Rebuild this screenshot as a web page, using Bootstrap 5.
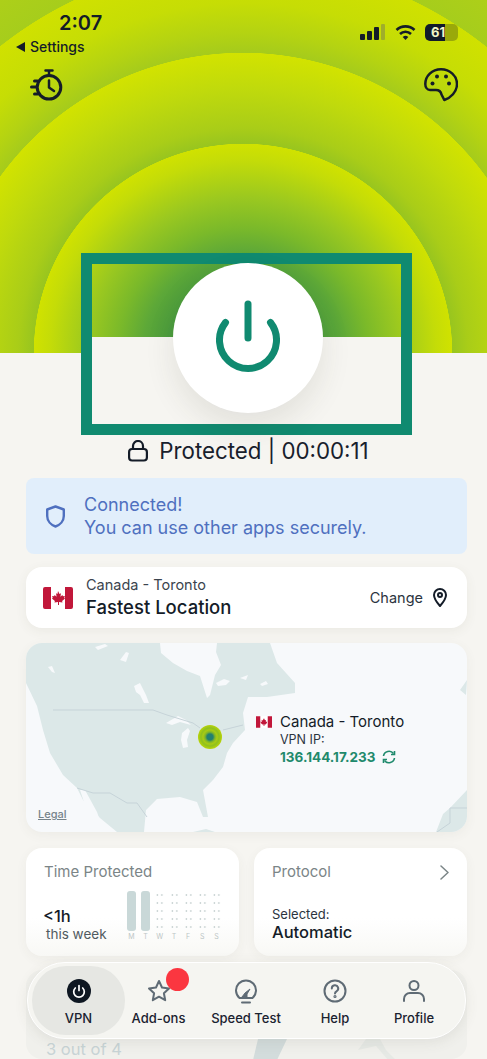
<!DOCTYPE html>
<html lang="en">
<head>
  <meta charset="UTF-8">
  <meta name="viewport" content="width=device-width, initial-scale=1.0">
  <title>VPN</title>
  <link href="https://cdn.jsdelivr.net/npm/bootstrap@5.3.0/dist/css/bootstrap.min.css" rel="stylesheet">
  <style>
    html, body { height: 1059px; overflow: hidden; }
    body { background: #f6f5f1; font-family: Inter, "Noto Sans", sans-serif; color: #141c28; position: relative; }
    .hero {
      height: 353px; position: relative;
      background: radial-gradient(circle at 243px 353px,
        #4a9b3d 0, #4a9b3d 75px, #5da838 100px, #7ab92a 125px, #9ac820 155px, #c4dc08 193px, #d0e200 209px,
        #98c51f 209.5px, #a9cd18 225px, #c0da0c 265px, #d2e300 300px,
        #a5cb1c 300.5px, #b4d312 320px, #c6dd05 350px, #d0e100 391px,
        #a6cd1c 391.5px, #afd018 440px);
    }
    .clock { font-size: 20px; font-weight: 600; line-height: 24px; padding: 11px 0 0 59px; }
    .back-link { font-size: 14px; font-weight: 500; line-height: 18px; padding: 3px 0 0 16px; gap: 5px; }
    .sys-icons { padding: 24px 29px 0 0; gap: 9px; }
    .batt { width: 33px; height: 17px; border-radius: 5px; background: linear-gradient(90deg, #111a2a 61%, #9aa90a 61%); color: #f2f5c8; font-size: 13px; font-weight: 700; line-height: 17px; padding-left: 6px; }
    .top-tools { padding: 12px 29px 0 30px; }
    .power-frame {
      position: absolute; left: 81px; top: 253px; width: 331px; height: 182px;
      border: 11px solid #108a70;
      background: linear-gradient(transparent 73px, #f6f5f1 73px);
    }
    .power-btn {
      position: absolute; left: 81px; top: -1px; width: 150px; height: 150px; border-radius: 50%;
      background: #fff; box-shadow: 0 14px 30px rgba(60,60,40,.1);
    }
    .power-btn svg { margin-bottom: 4px; }
    .status-line { margin-top: 83px; height: 30px; padding-left: 10px; font-size: 22.3px; line-height: 30px; gap: 11px; color: #18202c; }
    .page-wrap { padding: 0 20px 0 26px; }
    .notice { margin-top: 12px; height: 76px; border-radius: 8px; background: #e1eefb; color: #4f70bf; font-size: 18px; line-height: 23px; padding-left: 20px; gap: 19px; }
    .loc-card { margin-top: 13px; height: 61px; border-radius: 16px; padding: 0 20px 0 17px; box-shadow: 0 3px 12px rgba(80,80,60,.07); }
    .loc-city { font-size: 14.5px; line-height: 20px; color: #3b444e; padding-left: 1px; }
    .loc-name { font-size: 18.5px; font-weight: 500; line-height: 25px; padding-left: 1px; }
    .loc-change { font-size: 14.5px; color: #2b343e; gap: 10px; }
    .map-card { margin-top: 15px; height: 189px; border-radius: 16px; overflow: hidden; position: relative; background: #f7f9fb; box-shadow: 0 3px 12px rgba(80,80,60,.06); }
    .map-pin { position: absolute; left: 172px; top: 82px; width: 24px; height: 24px; border-radius: 50%; background: radial-gradient(circle, #23806f 0, #23806f 3px, #7fb52a 5px, #a9cb12 7px, #8fc01e 9px, #b9d40a 12px); }
    .map-label { position: absolute; left: 230px; top: 69px; }
    .map-city { font-size: 15px; line-height: 20px; }
    .map-ip-label { font-size: 12.5px; line-height: 15px; padding-left: 24px; color: #2b343e; }
    .map-ip { font-size: 13.5px; font-weight: 700; line-height: 18px; padding-left: 24px; margin-top: 1px; color: #1f8a6c; gap: 6px; }
    .map-legal { position: absolute; left: 12px; top: 163px; font-size: 11px; font-weight: 500; color: #76838a; text-decoration: underline; }
    .stat-row { margin-top: 16px; gap: 15px; }
    .stat-card { height: 108px; width: 213px; border-radius: 16px; background: linear-gradient(#fff 65%, #f8f8f5); box-shadow: 0 3px 12px rgba(80,80,60,.05); padding: 14px 18px 0; }
    .stat-title { font-size: 15px; line-height: 20px; color: #7b8587; }
    .stat-big { font-size: 16.5px; font-weight: 500; line-height: 22px; }
    .stat-hours { margin-top: 23px; margin-left: -1px; }
    .stat-small { font-size: 13.5px; line-height: 14px; color: #505a60; padding-left: 2px; }
    .stat-sel { font-size: 13px; line-height: 15px; margin-top: 25px; color: #2b343e; }
    .stat-value { line-height: 20px; }
    .week-chart { position: absolute; left: 101px; top: 43px; gap: 5.5px; }
    .day-col { width: 8.7px; }
    .day-bar { height: 40px; border-radius: 3px; background: #c9d8d8; }
    .day-dots { height: 40px; background: radial-gradient(circle, #c2cdcd 0.7px, transparent 1.1px) 0 0 / 4.6px 8px; }
    .day-name { font-size: 7px; line-height: 11px; text-align: center; color: #bcc6c6; }
    .next-card { margin-top: 14px; height: 89px; width: 441px; border-radius: 16px; background: #f0f0ec; padding: 67px 20px 0; font-size: 16.5px; color: #c8d4d6; position: relative; overflow: hidden; }
    .next-ring { position: absolute; left: 224px; bottom: 0; }
    .bottom-nav {
      position: absolute; left: 27px; top: 962px; width: 439px; height: 77px; border-radius: 38px;
      background: #f5f5f1; border: 1px solid #fff; box-shadow: 0 3px 14px rgba(80,80,60,.1);
      display: grid; grid-template-columns: 93px 67px 108px 70px 88px; padding: 3px 0 3px 4px;
    }
    .nav-tab { font-size: 13px; font-weight: 500; line-height: 16px; padding-top: 12px; gap: 6px; border-radius: 34px; white-space: nowrap; position: relative; color: #1a2230; }
    .nav-tab.active-tab { background: #e6e7e3; }
    .nav-tab svg { height: 26px; }
    .red-dot { position: absolute; left: 41px; top: 2px; width: 23px; height: 23px; border-radius: 50%; background: #fb3640; }
  </style>
</head>
<body>
  <div class="hero">
    <div class="d-flex justify-content-between">
      <div>
        <div class="clock">2:07</div>
        <div class="back-link d-flex align-items-center">
          <svg width="9" height="10" viewBox="0 0 9 10"><path d="M0 5 9 0v10z" fill="#141c28"/></svg>
          Settings
        </div>
      </div>
      <div class="sys-icons d-flex align-items-start">
        <svg width="26" height="17" viewBox="0 0 26 17"><g fill="#141c28"><rect x="0" y="10" width="5" height="6" rx="1"/><rect x="7" y="7" width="5" height="9" rx="1"/><rect x="14" y="3" width="5" height="13" rx="1"/></g><rect x="21" y="0" width="4" height="16" rx="1" fill="#8e9a3c" opacity=".7"/></svg>
        <svg width="21" height="17" viewBox="0 0 21 17"><g fill="none" stroke="#141c28" stroke-width="2.6"><path d="M1.500 6a13 13 0 0 1 18 0"/><path d="M5 10a8 8 0 0 1 11 0"/></g><path d="M7.700 13a4 4 0 0 1 5.600 0L10.500 16z" fill="#141c28"/></svg>
        <div class="batt">61</div>
      </div>
    </div>
    <div class="top-tools d-flex justify-content-between">
      <svg width="34" height="34" viewBox="30 69 34 34" fill="none" stroke="#141c28" stroke-width="3" stroke-linecap="round" stroke-linejoin="round">
        <circle cx="49" cy="88.300" r="11.800"/>
        <path d="M45.500 71.500h7M49 71.500v4.500" stroke-width="2.500"/>
        <path d="M49 81.500v7l5 3.500" stroke-width="2.500"/>
        <path d="M31.500 88h5M34.500 82h3M34.500 95h3"/>
      </svg>
      <svg width="34" height="34" viewBox="424 69 34 34" fill="none" stroke="#141c28" stroke-width="2.500" stroke-linejoin="round">
        <path d="M441 70.300C450 70.300 457 77 457 85 457 93 450.500 99 444.300 101L441.500 95.500Q440.500 91 436 91L430 91C427 91 425.300 88 425.300 85 425.300 77 432 70.300 441 70.300Z"/>
        <g fill="#141c28" stroke="none"><circle cx="437" cy="77.500" r="2"/><circle cx="446" cy="77.500" r="2"/><circle cx="432.500" cy="84.500" r="2"/><circle cx="449" cy="84.500" r="2"/></g>
      </svg>
    </div>
    <div class="power-frame">
      <div class="power-btn d-flex align-items-center justify-content-center">
        <svg width="64" height="72" viewBox="0 0 64 72" fill="none" stroke="#108a70" stroke-width="7" stroke-linecap="round">
          <path d="M32 4v34"/>
          <path d="M9.500 22.500a28.500 28.500 0 1 0 45 0"/>
        </svg>
      </div>
    </div>
  </div>

  <div class="status-line d-flex justify-content-center align-items-center">
    <svg width="20" height="22" viewBox="0 0 20 22" fill="none" stroke="#141c28" stroke-width="2.200"><rect x="1.100" y="9" width="17.800" height="11.500" rx="3"/><path d="M5 9V6a5 5 0 0 1 10 0v3"/></svg>
    <span>Protected | 00:00:11</span>
  </div>

  <div class="page-wrap">
    <div class="notice d-flex align-items-center">
      <svg width="19" height="23" viewBox="0 0 19 23" fill="none" stroke="#4f70bf" stroke-width="2.400" stroke-linejoin="round"><path d="M9.500 1.500 17.800 4.500V11C17.800 16 14 20 9.500 21.500 5 20 1.200 16 1.200 11V4.500Z"/></svg>
      <div>Connected!<br>You can use other apps securely.</div>
    </div>

    <div class="card border-0 loc-card flex-row align-items-center justify-content-between">
      <div class="d-flex align-items-center gap-2">
        <svg class="me-1" width="30" height="22" viewBox="0 0 30 22"><rect width="30" height="22" rx="2" fill="#fff"/><path d="M2 0h6v22H2a2 2 0 0 1-2-2V2a2 2 0 0 1 2-2ZM22 0h6a2 2 0 0 1 2 2v18a2 2 0 0 1-2 2h-6Z" fill="#c1173a"/><path d="M15 4l1.500 3 1.500-.7-.6 3.400 2-1.700.5 1.300 2-.3-.7 2 .9.500-3 2.600.4 1.300-3.500-.5V18h-1v-3.100l-3.500.5.400-1.300-3-2.600.9-.5-.7-2 2 .3.500-1.300 2 1.700-.6-3.400 1.500.7Z" fill="#c1173a"/></svg>
        <div>
          <div class="loc-city">Canada - Toronto</div>
          <div class="loc-name">Fastest Location</div>
        </div>
      </div>
      <div class="loc-change d-flex align-items-center">
        Change
        <svg width="14" height="19" viewBox="0 0 14 19" fill="none" stroke="#141c28" stroke-width="2"><path d="M7 18C3 13.500 1 10.500 1 7a6 6 0 0 1 12 0c0 3.500-2 6.500-6 11Z" stroke-linejoin="round"/><circle cx="7" cy="7" r="2"/></svg>
      </div>
    </div>

    <div class="map-card">
      <svg class="d-block" width="441" height="189" viewBox="26 643 441 189">
        <path fill="#dce8e8" d="M26 643H160L161 653 173 663 187 671 200 676 207 698 210 695 215 675 221 665 216 652 217 643H270L277 663 295 683 295 693 267 697 248 697 243 713 245 730 233 743 227 753 223 767 213 780 203 790 208 817 203 817 197 802 180 797 157 799 146 810 144 832H117L100 818 83 800 77 788 63 775 50 753 43 730 37 706 26 683Z"/>
        <path fill="#f7f9fb" d="M166 723 178 716 186 720 191 725 180 722 172 725ZM182 733 188 728 190 731 187 740 188 747 183 748 181 740ZM134 686 140 683 146 695 149 703 144 703 140 695 136 692ZM120 660 126 652 129 653 126 662ZM48 667 52 666 55 673 52 672ZM95 647 105 644 108 646 98 650ZM216 683 224 679 230 681 226 685 218 686ZM240 678 248 675 246 680ZM260 684 266 681 268 684 262 686ZM80 790 85 790 97 812 104 832H100L86 808Z"/>
        <path fill="#dce8e8" d="M467 680 460 690 466 695ZM467 790 450 808 443 814 436 832H467ZM193 832 206 829 215 832Z"/>
        <path fill="none" stroke="#c6d3d8" stroke-width="1" d="M53 710H153L167 715 193 723 200 728M223 730 243 725M77 788 93 793 110 793 127 803 137 803 147 817M437 832 450 823V808H467"/>
      </svg>
      <div class="map-pin"></div>
      <div class="map-label">
        <div class="map-city d-flex align-items-center gap-2">
          <svg width="16" height="12" viewBox="0 0 30 22"><rect width="30" height="22" fill="#fff"/><path d="M0 0h8v22H0ZM22 0h8v22h-8Z" fill="#c1173a"/><path d="M15 4l2 4 2-1-.6 4 2.600-1-.6 3-2.400 2.500-2-.5V18h-2v-3l-2 .5L9 13l-.6-3 2.600 1L10.400 7l2 1Z" fill="#c1173a"/></svg>
          Canada - Toronto
        </div>
        <div class="map-ip-label">VPN IP:</div>
        <div class="map-ip d-flex align-items-center">
          136.144.17.233
          <svg width="14" height="14" viewBox="0 0 14 14" fill="none" stroke="#1f8a6c" stroke-width="1.600"><path d="M1.500 6a5.600 5.600 0 0 1 10-2.500M12.500 8a5.600 5.600 0 0 1-10 2.500"/><path d="M12.500 1v3.500H9M1.500 13V9.500H5"/></svg>
        </div>
      </div>
      <div class="map-legal">Legal</div>
    </div>

    <div class="stat-row d-flex">
      <div class="stat-card position-relative">
        <div class="stat-title">Time Protected</div>
        <div class="stat-big stat-hours">&lt;1h</div>
        <div class="stat-small">this week</div>
        <div class="week-chart d-flex" id="week"></div>
      </div>
      <div class="stat-card">
        <div class="stat-title d-flex justify-content-between align-items-center">
          Protocol
          <svg width="9" height="15" viewBox="0 0 9 15" fill="none" stroke="#7b8587" stroke-width="1.500" stroke-linecap="round" stroke-linejoin="round"><path d="M1 1l7 6.500L1 14"/></svg>
        </div>
        <div class="stat-sel">Selected:</div>
        <div class="stat-big stat-value">Automatic</div>
      </div>
    </div>

    <div class="next-card">
      3 out of 4
      <svg class="next-ring" width="150" height="29" viewBox="0 0 150 29"><path d="M3 30 8 9H37L27 30Z" fill="#d3dcdc"/><path d="M108 20 116 9H130L136 20 146 30H138L126 16Z" fill="#e6e9e5"/></svg>
    </div>
  </div>

  <div class="bottom-nav">
    <div class="nav-tab active-tab d-flex flex-column align-items-center">
      <svg width="24" height="26" viewBox="0 0 24 26"><circle cx="12" cy="13" r="12" fill="#0e1722"/><path d="M12 7.500v5M8.300 10a5.300 5.300 0 1 0 7.400 0" fill="none" stroke="#fff" stroke-width="1.700" stroke-linecap="round"/></svg>
      VPN
    </div>
    <div class="nav-tab d-flex flex-column align-items-center">
      <svg width="24" height="26" viewBox="0 0 24 26" fill="none" stroke="#5f6b75" stroke-width="2" stroke-linejoin="round"><path d="M12 3l3 6.500 7 .9-5.100 4.800 1.300 7L12 18.700l-6.200 3.500 1.300-7L2 10.400l7-.9Z"/></svg>
      Add-ons
      <span class="red-dot"></span>
    </div>
    <div class="nav-tab d-flex flex-column align-items-center">
      <svg width="24" height="26" viewBox="0 0 24 26" fill="none" stroke="#5f6b75" stroke-width="2" stroke-linecap="round" stroke-linejoin="round"><path d="M5.500 20a10 10 0 1 1 13 0Z"/><path d="M8 19 11 15 16 11 13 16 13 19Z" fill="#5f6b75" stroke-width="1"/><path d="M8 24.500h8"/></svg>
      Speed Test
    </div>
    <div class="nav-tab d-flex flex-column align-items-center">
      <svg width="24" height="26" viewBox="0 0 24 26" fill="none" stroke="#5f6b75" stroke-width="2" stroke-linecap="round"><circle cx="12" cy="13" r="10.500"/><path d="M8.800 10.500a3.200 3.200 0 1 1 4.700 2.800c-1 .6-1.500 1.200-1.500 2.200"/><circle cx="12" cy="18.500" r=".6"/></svg>
      Help
    </div>
    <div class="nav-tab d-flex flex-column align-items-center">
      <svg width="24" height="26" viewBox="0 0 24 26" fill="none" stroke="#5f6b75" stroke-width="2" stroke-linecap="round"><circle cx="12" cy="7.500" r="4.500"/><path d="M2 23v-2a6 6 0 0 1 6-6h8a6 6 0 0 1 6 6v2"/></svg>
      Profile
    </div>
  </div>

  <script>
    const week = document.getElementById('week');
    ['M', 'T', 'W', 'T', 'F', 'S', 'S'].forEach((d, i) => {
      const col = document.createElement('div');
      col.className = 'day-col';
      col.innerHTML = `<div class="${i < 2 ? 'day-bar' : 'day-dots'}"></div><div class="day-name">${d}</div>`;
      week.appendChild(col);
    });
  </script>
  <script src="https://cdn.jsdelivr.net/npm/bootstrap@5.3.0/dist/js/bootstrap.bundle.min.js"></script>
</body>
</html>
